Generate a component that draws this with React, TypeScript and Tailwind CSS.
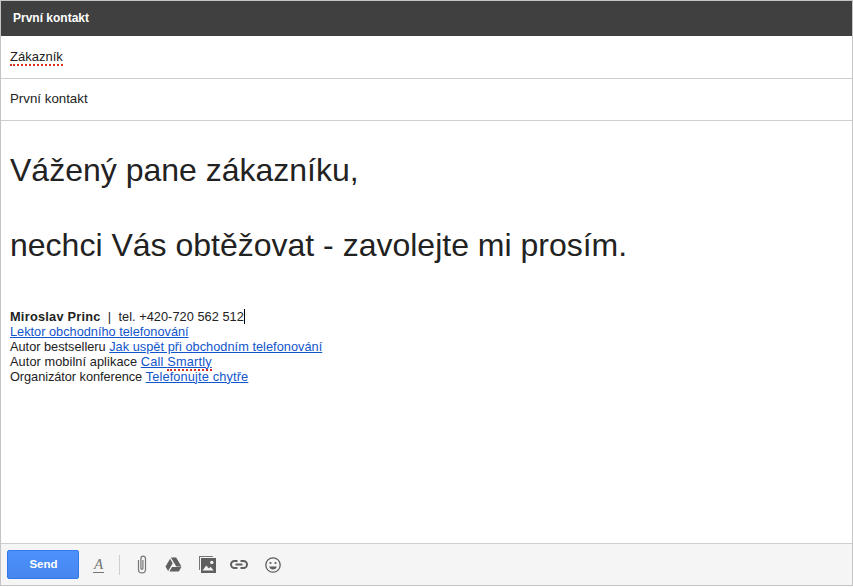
const spell = 'border-b-2 border-dotted border-[#d93025]';
const link = 'text-[#1155cc] underline';

function Attach() {
  return (
    <svg width="12" height="19" viewBox="0 0 12 19" fill="none" stroke="#757575" strokeWidth="1.2">
      <path d="M2.5 5v9.4a3.5 3.5 0 0 0 7 0V3.4a2.3 2.3 0 0 0-4.6 0v9.8a1 1 0 0 0 2 0V5" />
    </svg>
  );
}

function Drive() {
  return (
    <svg width="17" height="15" viewBox="0 0 17 15" fill="#5f5f5f">
      <path d="M5.9.5h5.2l5.4 9h-5.2z" />
      <path d="M5.1 1.8l2.6 4.5L3.1 14 .5 9.5z" />
      <path d="M4.4 14.4l2.6-4.4h9.4l-2.6 4.4z" />
    </svg>
  );
}

function Photo() {
  return (
    <svg width="17" height="17" viewBox="0 0 17 17">
      <path d="M0 0h14v1H1v13H0z" fill="#757575" />
      <path d="M2 2h15v15H2z" fill="#5f5f5f" />
      <circle cx="12.8" cy="6.4" r="1.7" fill="#f5f5f5" />
      <path d="M3.6 14.6l3.6-5.2 2.8 3 1.6-1.6 3 3.8z" fill="#f5f5f5" />
    </svg>
  );
}

function LinkIcon() {
  return (
    <svg width="18" height="9" viewBox="0 0 18 9" fill="none" stroke="#5f5f5f" strokeWidth="2">
      <path d="M7.5 1H4.5a3.5 3.5 0 0 0 0 7h3" />
      <path d="M10.5 1h3a3.5 3.5 0 0 1 0 7h-3" />
      <path d="M5.5 4.5h7" />
    </svg>
  );
}

function Smile() {
  return (
    <svg width="16" height="16" viewBox="0 0 16 16" fill="none">
      <circle cx="8" cy="8" r="7.2" stroke="#5f5f5f" strokeWidth="1.3" />
      <circle cx="5.5" cy="6" r="1.1" fill="#5f5f5f" />
      <circle cx="10.5" cy="6" r="1.1" fill="#5f5f5f" />
      <path d="M4.2 9.4h7.6a3.9 3.9 0 0 1-7.6 0z" fill="#5f5f5f" />
    </svg>
  );
}

export default function App() {
  return (
    <div className="flex h-[587px] w-[853px] flex-col overflow-hidden bg-white font-['Liberation_Sans',Arial,sans-serif] text-[#222222]">
      <div className="flex h-[586px] flex-col border border-[#c4c4c4]">
        <div className="flex h-[35px] shrink-0 items-center bg-[#404040] pb-[1px] pl-[12px] text-[12px] font-bold text-white">
          První kontakt
        </div>
        <div className="flex h-[43px] shrink-0 items-center border-b border-[#cfcfcf] pl-[9px] text-[13px]">
          <span className={`${spell} leading-[15px]`}>Zákazník</span>
        </div>
        <div className="flex h-[42px] shrink-0 items-center border-b border-[#cfcfcf] pb-[2px] pl-[9px] text-[13.3px]">
          První kontakt
        </div>
        <div className="min-h-0 flex-1 pl-[9px] pt-[31px]">
          <div className="text-[32px] leading-[37.5px]">
            <div>Vážený pane zákazníku,</div>
            <div className="h-[37.5px]" />
            <div>nechci Vás obtěžovat - zavolejte mi prosím.</div>
          </div>
          <div className="mt-[44px] text-[12.75px] leading-[15px]">
            <div className="flex items-center">
              <b className="tracking-[0.25px]">Miroslav Princ</b>
              <span className="whitespace-pre tracking-[0.05px]">  |  tel. +420-720 562 512</span>
              <span className="h-[15px] w-px bg-black" />
            </div>
            <div>
              <span className={link}>Lektor obchodního telefonování</span>
            </div>
            <div>
              Autor bestselleru <span className={`${link} tracking-[0.03px]`}>Jak uspět při obchodním telefonování</span>
            </div>
            <div>
              <span className="tracking-[0.08px]">Autor mobilní aplikace</span>{' '}
              <span className={`${link} tracking-[0.2px]`}>
                Call <span className="border-b-2 border-dotted border-[#d93025] pb-[0px]">Smartly</span>
              </span>
            </div>
            <div>
              <span className="tracking-[-0.05px]">Organizátor konference</span>{' '}
              <span className={`${link} tracking-[0.15px]`}>Telefonujte chytře</span>
            </div>
          </div>
        </div>
        <div className="flex h-[42px] shrink-0 items-center border-t border-[#cfcfcf] bg-[#f5f5f5] pl-[6px]">
          <div className="flex h-[29px] w-[72px] items-center justify-center rounded-[2px] border border-[#3079ed] bg-gradient-to-b from-[#4d90fe] to-[#4787ed] pl-[1px] text-[11.5px] font-bold text-white">
            Send
          </div>
          <span className="ml-[14px] w-[11px] border-b border-[#757575] text-center font-['Liberation_Serif',serif] text-[15px] italic leading-[15px] text-[#757575]">
            A
          </span>
          <span className="ml-[15px] h-[20px] w-px bg-[#cfcfcf]" />
          <span className="ml-[16px] flex">
            <Attach />
          </span>
          <span className="ml-[17px] flex">
            <Drive />
          </span>
          <span className="ml-[17px] flex">
            <Photo />
          </span>
          <span className="ml-[14px] flex">
            <LinkIcon />
          </span>
          <span className="ml-[17px] flex">
            <Smile />
          </span>
        </div>
      </div>
    </div>
  );
}
